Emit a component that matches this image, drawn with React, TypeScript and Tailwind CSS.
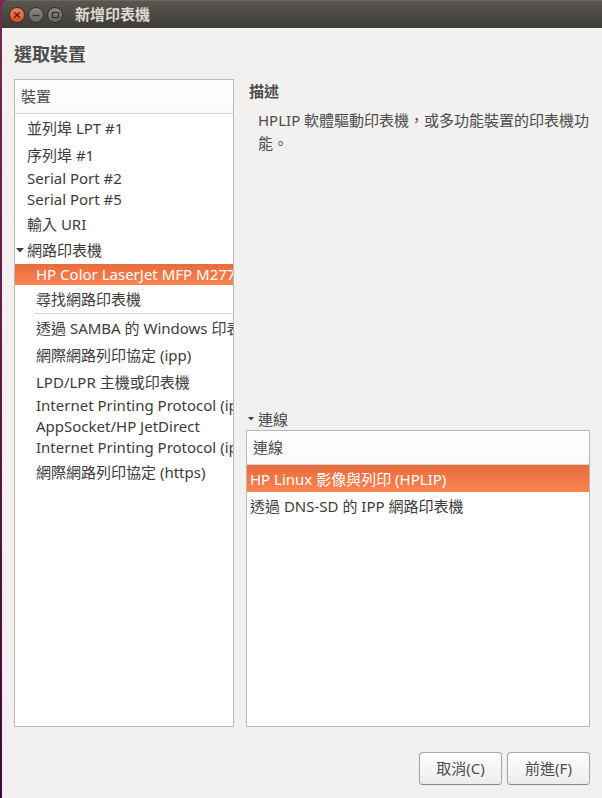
import { useState } from "react";
import clsx from "clsx";

type Device = { name: string; short?: boolean };

const localDevices: Device[] = [
  { name: "並列埠 LPT #1" },
  { name: "序列埠 #1" },
  { name: "Serial Port #2", short: true },
  { name: "Serial Port #5", short: true },
  { name: "輸入 URI" },
];

const foundPrinters: Device[] = [
  { name: "HP Color LaserJet MFP M277dw", short: true },
  { name: "尋找網路印表機" },
];

const networkProtocols: Device[] = [
  { name: "透過 SAMBA 的 Windows 印表機" },
  { name: "網際網路列印協定 (ipp)" },
  { name: "LPD/LPR 主機或印表機" },
  { name: "Internet Printing Protocol (ipp14)", short: true },
  { name: "AppSocket/HP JetDirect", short: true },
  { name: "Internet Printing Protocol (ipps)", short: true },
  { name: "網際網路列印協定 (https)" },
];

const connections = ["HP Linux 影像與列印 (HPLIP)", "透過 DNS-SD 的 IPP 網路印表機"];

const selectedStyle = "bg-linear-to-b from-[#e86c3c] to-[#f98452] text-white";

function WindowControls() {
  const base = "grid size-4 place-items-center rounded-full border border-[#34322d] bg-linear-to-b";
  return (
    <div className="flex gap-[3px]">
      <button aria-label="關閉" className={clsx(base, "from-[#f5835c] to-[#de4c1b]")}>
        <svg viewBox="0 0 14 14" className="size-3.5" fill="none" stroke="#4f2415" strokeWidth="1.4">
          <path d="M4.2 4.2l5.6 5.6M9.8 4.2l-5.6 5.6" />
        </svg>
      </button>
      <button aria-label="最小化" className={clsx(base, "from-[#8b8982] to-[#66645e]")}>
        <svg viewBox="0 0 14 14" className="size-3.5" fill="none" stroke="#33322e" strokeWidth="1.2">
          <path d="M3.5 7.5h7" />
        </svg>
      </button>
      <button aria-label="最大化" className={clsx(base, "from-[#8b8982] to-[#66645e]")}>
        <svg viewBox="0 0 14 14" className="size-3.5" fill="none" stroke="#33322e" strokeWidth="1.2">
          <rect x="4.5" y="4.5" width="6" height="5" />
        </svg>
      </button>
    </div>
  );
}

function Arrow({ open, size }: { open: boolean; size: number }) {
  return (
    <svg
      viewBox="0 0 8 5"
      width={size}
      className={clsx("shrink-0", !open && "-rotate-90")}
      fill="#3c3c3c"
    >
      <path d="M0 0h8L4 4.5z" />
    </svg>
  );
}

function DeviceRow({
  device,
  nested,
  selected,
  onSelect,
}: {
  device: Device;
  nested?: boolean;
  selected: boolean;
  onSelect: (name: string) => void;
}) {
  return (
    <li>
      <button
        onClick={() => onSelect(device.name)}
        aria-pressed={selected}
        className={clsx(
          "block w-full overflow-hidden text-left whitespace-nowrap",
          nested ? "pl-[21px]" : "pl-3",
          device.short ? "h-[21px] leading-[21px]" : "h-[27px] leading-[29px]",
          selected && selectedStyle,
        )}
      >
        {device.name}
      </button>
    </li>
  );
}

export default function App() {
  const [device, setDevice] = useState("HP Color LaserJet MFP M277dw");
  const [connection, setConnection] = useState(connections[0]);
  const [networkOpen, setNetworkOpen] = useState(true);
  const [connectionsOpen, setConnectionsOpen] = useState(true);

  const row = (item: Device, nested = false) => (
    <DeviceRow
      key={item.name}
      device={item}
      nested={nested}
      selected={item.name === device}
      onSelect={setDevice}
    />
  );

  return (
    <div className="min-h-screen bg-linear-to-b from-[#772953] to-[#3f0a35] pl-0.5">
      <div className="flex min-h-screen flex-col font-['Noto_Sans','Noto_Sans_CJK_TC',sans-serif] text-[15px] text-[#3c3c3c]">
        <header className="flex h-7 items-center gap-3 rounded-tl-md border-t border-[#6b6861] bg-linear-to-b from-[#59574f] to-[#3d3c37] pl-[7px]">
          <WindowControls />
          <h1 className="font-bold text-[#dfdbd2]">新增印表機</h1>
        </header>

        <main className="flex flex-1 flex-col bg-[#f2f1f0] px-3 pb-[13px]">
          <h2 className="flex h-[51px] items-center text-lg font-bold text-[#4c4c4c]">選取裝置</h2>

          <div className="flex flex-1 gap-3">
            <section className="w-[220px] shrink-0 border border-[#bcb8b4] bg-white">
              <h3 className="flex h-[34px] items-center border-b border-[#d5d3d1] bg-linear-to-b from-white to-[#f9f9f9] px-1.5 text-[#4c4c4c]">
                裝置
              </h3>
              <ul>
                {localDevices.map((item) => row(item))}
                <li>
                  <button
                    onClick={() => setNetworkOpen(!networkOpen)}
                    aria-expanded={networkOpen}
                    className="flex h-[27px] w-full items-center gap-[3px] pl-px leading-[27px]"
                  >
                    <Arrow open={networkOpen} size={8} />
                    網路印表機
                  </button>
                  {networkOpen && (
                    <ul>
                      {foundPrinters.map((item) => row(item, true))}
                      <li role="separator" className="mt-px ml-[19px] h-px bg-[#d9d9d9]" />
                      {networkProtocols.map((item) => row(item, true))}
                    </ul>
                  )}
                </li>
              </ul>
            </section>

            <div className="flex min-w-0 flex-1 flex-col text-[#4c4c4c]">
              <section className="flex-1 pl-[3px]">
                <h3 className="leading-6 font-bold">描述</h3>
                <p className="mt-1.5 pl-[9px] leading-[23px]">
                  HPLIP 軟體驅動印表機，或多功能裝置的印表機功能。
                </p>
              </section>

              <button
                onClick={() => setConnectionsOpen(!connectionsOpen)}
                aria-expanded={connectionsOpen}
                className="flex h-[22px] items-center gap-1 pl-0.5 leading-[22px]"
              >
                <Arrow open={connectionsOpen} size={6} />
                連線
              </button>
              {connectionsOpen && (
                <table className="block h-[297px] w-full border border-[#bcb8b4] bg-white">
                  <thead className="block">
                    <tr className="block">
                      <th className="flex h-[34px] items-center border-b border-[#d5d3d1] bg-linear-to-b from-white to-[#f9f9f9] px-1.5 font-normal">
                        連線
                      </th>
                    </tr>
                  </thead>
                  <tbody className="block text-[#3c3c3c]">
                    {connections.map((name) => (
                      <tr key={name} className="block">
                        <td className="block">
                          <button
                            onClick={() => setConnection(name)}
                            aria-pressed={name === connection}
                            className={clsx(
                              "block h-[27px] w-full overflow-hidden pl-[3px] text-left leading-[29px]",
                              name === connection && selectedStyle,
                            )}
                          >
                            {name}
                          </button>
                        </td>
                      </tr>
                    ))}
                  </tbody>
                </table>
              )}
            </div>
          </div>

          <footer className="mt-[25px] flex justify-end gap-[5px]">
            {["取消(C)", "前進(F)"].map((label) => (
              <button
                key={label}
                className="h-[33px] w-[83px] rounded-sm border border-[#a9a6a2] border-b-[#8f8c88] bg-linear-to-b from-white to-[#ededed] text-[#4c4c4c] shadow-xs"
              >
                {label}
              </button>
            ))}
          </footer>
        </main>
      </div>
    </div>
  );
}
